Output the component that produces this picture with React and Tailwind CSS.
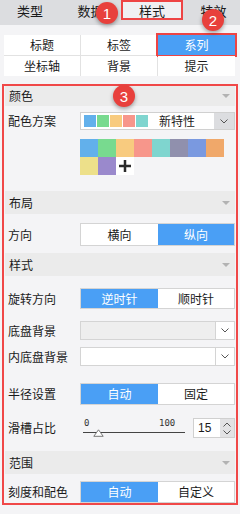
import React from "react";

const F = "font-['Noto_Sans_CJK_SC','Noto_Sans',sans-serif]";

function Badge({ n, cls }) {
  return (
    <div
      className={`absolute w-[22px] h-[22px] rounded-full bg-[#e8403c] text-white flex items-center justify-center text-[15px] font-['Liberation_Sans',sans-serif] shadow-[0_2px_4px_rgba(0,0,0,0.35)] ${cls}`}
    >
      {n}
    </div>
  );
}

function Header({ title, h, mt }) {
  return (
    <div className={`flex items-center justify-between bg-[#ebebeb] pl-[4px] pr-[5px] ${h} ${mt}`}>
      <span>{title}</span>
      <div className="w-0 h-0 border-l-[4px] border-r-[4px] border-t-[4px] border-l-transparent border-r-transparent border-t-[#b3b3b3]" />
    </div>
  );
}

function Label({ children }) {
  return <div className="w-[75px] pl-[3px] shrink-0">{children}</div>;
}

function Seg({ a, b, h, active = 0 }) {
  return (
    <div className={`flex w-[155px] border border-[#d4d4d4] bg-white ${h}`}>
      <div
        className={
          active === 0
            ? "w-[77px] flex items-center justify-center bg-[#4a9ff5] text-white"
            : "w-[77px] flex items-center justify-center"
        }
      >
        {a}
      </div>
      <div
        className={
          active === 1
            ? "flex-1 flex items-center justify-center bg-[#4a9ff5] text-white"
            : "flex-1 flex items-center justify-center"
        }
      >
        {b}
      </div>
    </div>
  );
}

function Chevron({ cls = "" }) {
  return (
    <svg width="8" height="5" viewBox="0 0 8 5" className={cls}>
      <path d="M0.5 0.5 L4 4 L7.5 0.5" fill="none" stroke="#555" strokeWidth="1" />
    </svg>
  );
}

function Select({ disabled }) {
  return (
    <div className="flex w-[155px] h-[19px] border border-[#d4d4d4]">
      <div className={disabled ? "flex-1 bg-[#eeeeee]" : "flex-1 bg-white"} />
      <div className="w-[19px] bg-white border-l border-[#d4d4d4] flex items-center justify-center">
        <Chevron />
      </div>
    </div>
  );
}

const palette = ["#62b0eb", "#78da8f", "#f8cb7f", "#f7968b", "#7fd5cf", "#9090ad", "#7a99e0", "#f0a86a", "#ede08a", "#9a89cc"];

export default function App() {
  return (
    <div className={`w-[240px] h-[514px] bg-[#f4f4f6] text-[12px] leading-none text-[#1a1a1a] relative overflow-hidden ${F}`}>
      {/* top tabs */}
      <div className="flex h-[25px] bg-[#dcdde0] text-[13px]">
        <div className="w-[60px] h-[20px] flex items-center justify-center">类型</div>
        <div className="w-[61px] h-[20px] flex items-center justify-center">数据</div>
        <div className="w-[62px] h-[20px] flex items-center justify-center bg-[#f0f0f2] border-2 border-[#ee4444]">样式</div>
        <div className="flex-1 h-[20px] flex items-center justify-center pl-[4px]">特效</div>
      </div>
      <Badge n="1" cls="left-[96px] top-[2px]" />
      <Badge n="2" cls="left-[202px] top-[9px]" />

      {/* sub tabs */}
      <div className="ml-[4px] mt-[10px] w-[231px] grid grid-cols-[76px_76px_77px] gap-[1px] bg-[#e2e2e2]">
        <div className="h-[20px] bg-white flex items-center justify-center">标题</div>
        <div className="h-[20px] bg-white flex items-center justify-center">标签</div>
        <div className="h-[20px] bg-[#4a9ff5] text-white flex items-center justify-center outline-2 outline-[#ee4444]">系列</div>
        <div className="h-[20px] bg-white flex items-center justify-center">坐标轴</div>
        <div className="h-[20px] bg-white flex items-center justify-center">背景</div>
        <div className="h-[20px] bg-white flex items-center justify-center">提示</div>
      </div>

      {/* panel */}
      <div className="ml-[2px] mt-[8px] w-[236px] border-2 border-[#f04848] px-[1px]">
        <Header title="颜色" h="h-[20px]" mt="mt-0" />
        <div className="flex items-center mt-[6px] h-[18px]">
          <Label>配色方案</Label>
          <div className="flex w-[155px] h-[18px] border border-[#d0d0d0] bg-white">
            <div className="flex-1 flex items-center pl-[3px] gap-[1px]">
              {palette.slice(0, 5).map((c) => (
                <div key={c} className="w-[12px] h-[12px]" style={{ background: c }} />
              ))}
              <span className="ml-[10px]">新特性</span>
            </div>
            <div className="w-[20px] bg-[#dcdde0] flex items-center justify-center">
              <Chevron />
            </div>
          </div>
        </div>
        <div className="flex mt-[9px]">
          <div className="w-[75px] shrink-0" />
          <div className="grid grid-cols-[repeat(8,18px)] grid-rows-[18px_18px]">
            {palette.map((c) => (
              <div key={c} style={{ background: c }} />
            ))}
            <div className="bg-white flex items-center justify-center">
              <svg width="12" height="12" viewBox="0 0 12 12">
                <rect x="4.75" y="0" width="2.5" height="12" fill="#2a2a2a" />
                <rect x="0" y="4.75" width="12" height="2.5" fill="#2a2a2a" />
              </svg>
            </div>
          </div>
        </div>

        <Header title="布局" h="h-[23px]" mt="mt-[16px]" />
        <div className="flex items-center mt-[9px]">
          <Label>方向</Label>
          <Seg a="横向" b="纵向" h="h-[23px]" active={1} />
        </div>

        <Header title="样式" h="h-[23px]" mt="mt-[7px]" />
        <div className="flex items-center mt-[12px]">
          <Label>旋转方向</Label>
          <Seg a="逆时针" b="顺时针" h="h-[21px]" active={0} />
        </div>
        <div className="flex items-center mt-[12px]">
          <Label>底盘背景</Label>
          <Select disabled />
        </div>
        <div className="flex items-center mt-[7px]">
          <Label>内底盘背景</Label>
          <Select />
        </div>
        <div className="flex items-center mt-[17px]">
          <Label>半径设置</Label>
          <Seg a="自动" b="固定" h="h-[22px]" active={0} />
        </div>

        <div className="flex items-center mt-[10px] h-[26px]">
          <Label>滑槽占比</Label>
          <div className="relative w-[110px] h-[26px] font-['DejaVu_Sans_Mono',monospace] text-[9px] text-[#333]">
            <span className="absolute left-[4px] top-[4px]">0</span>
            <span className="absolute left-[79px] top-[4px]">100</span>
            <div className="absolute left-[3px] top-[17px] w-[102px] h-[1px] bg-[#444]" />
            <svg className="absolute left-[13px] top-[14px]" width="11" height="8" viewBox="0 0 11 8">
              <path d="M5.5 0.8 L10.2 7.3 L0.8 7.3 Z" fill="#fff" stroke="#777" strokeWidth="1" />
            </svg>
          </div>
          <div className="ml-[3px] flex h-[20px] w-[42px] border border-[#d0d0d0]">
            <div className="flex-1 bg-white flex items-center pl-[4px] text-[12px] font-['Liberation_Sans',sans-serif]">15</div>
            <div className="w-[14px] bg-[#e2e2e4] flex flex-col items-center justify-center gap-[3px]">
              <svg width="8" height="5" viewBox="0 0 8 5">
                <path d="M0.5 4.5 L4 1 L7.5 4.5" fill="none" stroke="#555" strokeWidth="1" />
              </svg>
              <Chevron />
            </div>
          </div>
        </div>

        <Header title="范围" h="h-[23px]" mt="mt-[10px]" />
        <div className="flex items-center mt-[7px]">
          <Label>刻度和配色</Label>
          <Seg a="自动" b="自定义" h="h-[22px]" active={0} />
        </div>
      </div>
      <Badge n="3" cls="left-[113px] top-[85px]" />
    </div>
  );
}
